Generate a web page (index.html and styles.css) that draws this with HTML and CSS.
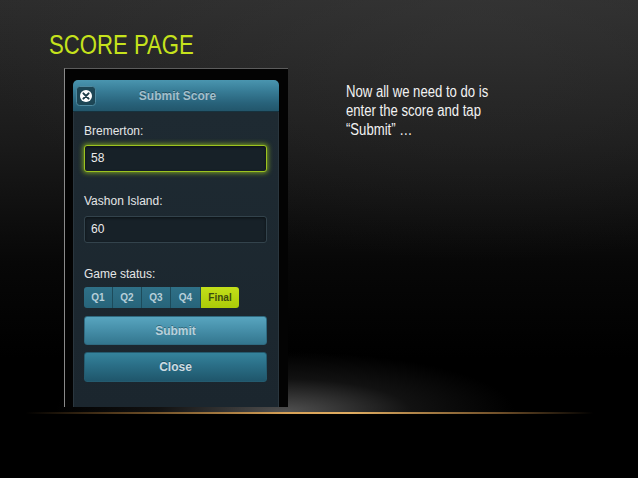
FILE: index.html
```html
<!DOCTYPE html>
<html>
<head>
<meta charset="utf-8">
<link rel="stylesheet" href="styles.css">
</head>
<body>
<div class="slide">
  <h1 class="title">SCORE PAGE</h1>
  <div class="row">
    <div class="phone">
      <div class="dialog">
        <div class="dlg-head">
          <span class="close-ico">
            <svg width="20" height="20" viewBox="0 0 20 20">
              <rect x="0.5" y="0.5" width="19" height="19" rx="3" fill="#1d4655" stroke="#4f8aa0" stroke-width="1"/>
              <circle cx="10" cy="10" r="6" fill="#ffffff"/>
              <path d="M7.4 7.4 L12.6 12.6 M12.6 7.4 L7.4 12.6" stroke="#1c3a46" stroke-width="2" stroke-linecap="round"/>
            </svg>
          </span>
          <span class="dlg-title">Submit Score</span>
          <span></span>
        </div>
        <div class="dlg-body">
          <div class="lbl l1">Bremerton:</div>
          <div class="input focus">58</div>
          <div class="lbl l2">Vashon Island:</div>
          <div class="input">60</div>
          <div class="lbl l3">Game status:</div>
          <div class="seg">
            <span class="sq w29 first">Q1</span>
            <span class="sq w29">Q2</span>
            <span class="sq w29">Q3</span>
            <span class="sq w30">Q4</span>
            <span class="sq final">Final</span>
          </div>
          <div class="btn submit">Submit</div>
          <div class="btn close">Close</div>
        </div>
      </div>
    </div>
    <p class="note">Now all we need to do is<br>enter the score and tap<br>“Submit” …</p>
  </div>
</div>
</body>
</html>
```

FILE: styles.css
```css
html, body {
  margin: 0;
  padding: 0;
  background: #000;
}

.slide {
  width: 638px;
  height: 478px;
  overflow: hidden;
  box-sizing: border-box;
  padding-top: 30px;
  background:
    linear-gradient(90deg, rgba(0,0,0,0) 4%, rgba(150,105,50,0.55) 18%, #d8a257 45%, #e0ad62 55%, rgba(190,135,70,0.6) 78%, rgba(0,0,0,0) 93%) 0 412px / 100% 2px no-repeat,
    radial-gradient(ellipse 230px 60px at 285px 100%, rgba(135,135,135,0.6), rgba(70,70,70,0.25) 55%, rgba(0,0,0,0) 100%) 0 340px / 100% 72px no-repeat,
    radial-gradient(ellipse 520px 260px at 480px 0, rgba(60,60,60,0.45), rgba(0,0,0,0) 100%),
    linear-gradient(180deg, #2c2c2c 0, #1a1a1a 30%, #070707 55%, #000 75%);
}

.title {
  margin: 0 0 0 49px;
  font-family: "Liberation Sans", Arial, sans-serif;
  font-weight: normal;
  font-size: 27px;
  line-height: 31px;
  color: #c6e31c;
  transform: scaleX(0.82);
  transform-origin: 0 0;
  white-space: nowrap;
}

.row {
  display: flex;
  align-items: flex-start;
  margin-top: 7px;
  padding-left: 64px;
}

.phone {
  width: 224px;
  height: 339px;
  flex: none;
  box-sizing: border-box;
  background: #030303;
  border-top: 1px solid #5c5c5c;
  border-left: 1px solid #8a8a8a;
  display: flex;
  flex-direction: column;
  padding: 11px 9px 0 8px;
  overflow: hidden;
}

.dialog {
  flex: 1;
  display: flex;
  flex-direction: column;
  font-family: "Liberation Sans", Arial, sans-serif;
}

.dlg-head {
  height: 32px;
  box-sizing: border-box;
  border-radius: 5px 5px 0 0;
  background: linear-gradient(180deg, #4a95af 0, #3a809a 30%, #28627a 75%, #22566b 100%);
  border-bottom: 1px solid #16323e;
  display: grid;
  grid-template-columns: 1fr auto 1fr;
  align-items: center;
  padding-left: 3px;
}

.close-ico {
  display: flex;
  width: 20px;
  height: 20px;
}

.dlg-title {
  font-weight: bold;
  font-size: 12px;
  color: #a3bfcb;
  text-shadow: 0 -1px 0 rgba(0,0,0,0.35);
}

.dlg-body {
  flex: 1;
  background: linear-gradient(180deg, #1e2a32 0, #1b262e 100%);
  border-left: 1px solid #2a363e;
  border-right: 1px solid #2a363e;
  padding: 12px 11px 0 10px;
  display: flex;
  flex-direction: column;
}

.lbl {
  font-size: 12px;
  line-height: 15px;
  color: #e4e6e7;
}

.l2 { margin-top: 22px; }
.l3 { margin-top: 24px; }

.input {
  margin-top: 6px;
  height: 27px;
  box-sizing: border-box;
  border: 1px solid #33434c;
  border-radius: 3px;
  background: #172128;
  box-shadow: inset 0 1px 3px rgba(0,0,0,0.5);
  color: #ececec;
  font-size: 12px;
  line-height: 25px;
  padding-left: 6px;
}

.input.focus {
  border-color: #9cc31f;
  box-shadow: 0 0 5px 1px rgba(155,200,30,0.75), inset 0 1px 3px rgba(0,0,0,0.5);
}

.l2 + .input { margin-top: 7px; }

.seg {
  display: flex;
  margin-top: 5px;
  height: 21px;
}

.sq {
  display: flex;
  align-items: center;
  justify-content: center;
  box-sizing: border-box;
  background: linear-gradient(180deg, #2f7087 0, #27647a 100%);
  border-right: 1px solid #1d4b5b;
  color: #b7cfd9;
  font-weight: bold;
  font-size: 10px;
}

.w29 { width: 29px; }
.w30 { width: 30px; }

.sq.first { border-radius: 3px 0 0 3px; }

.sq.final {
  width: 38px;
  border-right: none;
  border-radius: 0 3px 3px 0;
  background: linear-gradient(180deg, #c3df1a 0, #abcb08 100%);
  color: #3d4b0f;
}

.btn {
  box-sizing: border-box;
  border-radius: 3px;
  display: flex;
  align-items: center;
  justify-content: center;
  font-weight: bold;
  font-size: 12px;
  text-shadow: 0 -1px 0 rgba(0,0,0,0.3);
}

.btn.submit {
  margin-top: 8px;
  height: 29px;
  background: linear-gradient(180deg, #58a5bf 0, #4790aa 45%, #33768e 100%);
  border: 1px solid #2f6a80;
  color: #b9d1dc;
}

.btn.close {
  margin-top: 7px;
  height: 30px;
  background: linear-gradient(180deg, #35839c 0, #2a6e86 45%, #1f566b 100%);
  border: 1px solid #245b6f;
  color: #ccdbe2;
}

.note {
  margin: 14px 0 0 58px;
  font-family: "Liberation Sans", Arial, sans-serif;
  font-size: 16px;
  line-height: 19px;
  color: #f2f2f2;
  transform: scaleX(0.82);
  transform-origin: 0 0;
  white-space: nowrap;
}
```
